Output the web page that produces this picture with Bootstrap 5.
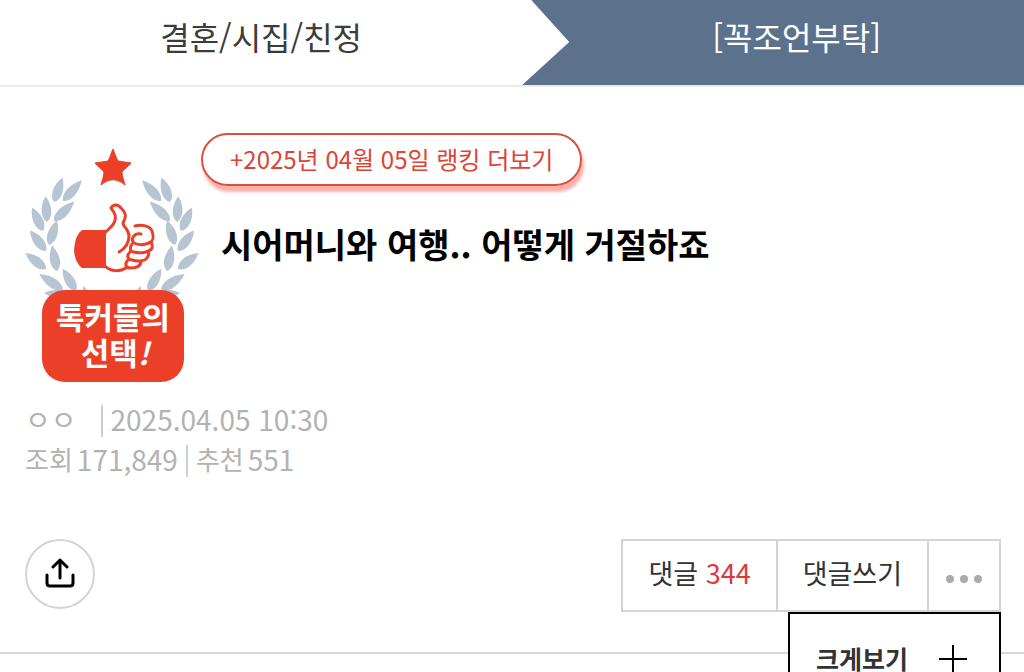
<!DOCTYPE html>
<html lang="ko">
<head>
<meta charset="utf-8">
<meta name="viewport" content="width=device-width, initial-scale=1">
<title>시어머니와 여행.. 어떻게 거절하죠</title>
<link href="https://cdn.jsdelivr.net/npm/bootstrap@5.3.0/dist/css/bootstrap.min.css" rel="stylesheet">
<style>
body { font-family: "Noto Sans CJK KR", sans-serif; background: #fff; color: #333; min-height: 100vh; }
a, button { white-space: nowrap; }
.crumbs { display: grid; grid-template-columns: 51fr 49fr; height: 87px; border-bottom: 2px solid #ebebeb; line-height: 72px; font-size: 32px; }
.crumbs a { color: #3c3c3c; }
.crumbs .crumb-active { background: #5c728c; color: #fff; padding-left: 47px; clip-path: polygon(9px 0, 100% 0, 100% 100%, 0 100%, 47px 42px); }
.post { padding: 46px 23px 40px 25px; border-bottom: 2px solid #d6d6d6; }
.emblem { width: 176px; height: 244px; margin-top: 8px; flex: none; }
.emblem text { font-size: 31px; font-weight: 700; fill: #fff; }
.rank-link { border: 2px solid #d9503f; border-radius: 27px; height: 53px; line-height: 47px; padding: 0 27px; font-size: 24px; color: #dc4436; box-shadow: 2px 6px 3px #fbb0a9; }
.post-title { font-size: 34px; line-height: 48px; font-weight: 700; color: #000; margin: 34px 0 0 20px; }
.meta { font-size: 28px; line-height: 40px; color: #b2b2b2; margin-top: 14px; }
.meta .word { font-size: 26px; }
.bar { width: 2px; height: 32px; background: #cfcfcf; position: relative; top: 2px; }
.post-tools { margin-top: 60px; }
.share { width: 70px; height: 70px; border: 2px solid #d4d4d4; border-radius: 50%; background: #fff; }
.actions { height: 73px; border: 2px solid #d4d4d4; }
.actions button { background: none; border: 0; padding: 0 25px 4px; font-size: 27px; color: #333; }
.actions button + button { border-left: 2px solid #d4d4d4; }
.actions .more { padding: 0 16px; }
.count { color: #e0383a; }
.zoom-box { top: 73px; right: 0; width: 213px; height: 94px; border: 2px solid #000; background: #fff; font-size: 25px; font-weight: 700; color: #333; padding: 0 32px 0 26px; }
</style>
</head>
<body>
<nav class="crumbs text-center">
  <a href="#" class="text-decoration-none">결혼/시집/친정</a>
  <a href="#" class="text-decoration-none crumb-active">[꼭조언부탁]</a>
</nav>
<main class="post">
  <header class="d-flex">
    <svg class="emblem" viewBox="25 141 176 244" role="img" aria-label="톡커들의 선택!">
      <defs>
        <path id="leaf" d="M0 0C-6-4-7-15 0-26C7-15 6-4 0 0Z"/>
        <g id="branch">
          <use href="#leaf" transform="translate(63 201) rotate(42) scale(1 1.08)"/>
          <use href="#leaf" transform="translate(54 202) rotate(19)"/>
          <use href="#leaf" transform="translate(54 221) rotate(46) scale(1 1.08)"/>
          <use href="#leaf" transform="translate(47 222) rotate(-3)"/>
          <use href="#leaf" transform="translate(43 231) rotate(-25)"/>
          <use href="#leaf" transform="translate(49 245) rotate(18)"/>
          <use href="#leaf" transform="translate(46 251) rotate(-38)"/>
          <use href="#leaf" transform="translate(57 271) rotate(-11)"/>
          <use href="#leaf" transform="translate(46 269) rotate(-52)"/>
          <use href="#leaf" transform="translate(63 290) rotate(-56) scale(1 1.1)"/>
          <use href="#leaf" transform="translate(76 291) rotate(-31)"/>
          <use href="#leaf" transform="translate(70 296) rotate(-83)"/>
          <path d="M83 286L90 292H83Z"/>
        </g>
      </defs>
      <g fill="#b7c5d3"><use href="#branch"/><use href="#branch" transform="matrix(-1 0 0 1 224 0)"/></g>
      <path fill="#ec3f28" stroke="#ec3f28" stroke-linejoin="round" d="M113 149C115 153 116 158 118 161C122 162 127 162 131 163C128 167 124 169 122 172C122 176 124 181 125 185C117 178 109 178 101 185C102 181 104 176 104 172C102 169 98 167 95 163C99 162 104 162 108 161C110 158 111 153 113 149Z"/>
      <path fill="#ec3f28" d="M82 230H106V268H82Q75 263 74 250Q75 235 82 230Z"/>
      <g fill="none" stroke="#ec3f28" stroke-width="3" stroke-linecap="round" stroke-linejoin="round">
        <path d="M104 234C108 229 112 227 114 223C117 217 115 213 111 208C113 204 118 204 121 208C127 214 126 217 123 223C123 227 129 229 129 236C129 243 126 248 119 252"/>
        <path d="M105 266C111 272 121 272 127 267"/>
        <path d="M135 226C142 224 150 226 152 231C154 237 154 241 149 243C144 245 138 245 134 243C130 239 134 233 141 234"/>
        <path d="M132 244C129 248 130 252 134 252C141 254 150 252 152 248C153 246 152 244 151 242"/>
        <path d="M130 252C126 256 128 260 132 260C138 262 145 261 147 258C149 255 149 253 148 252"/>
        <path d="M128 260C124 264 126 268 130 268C136 268 141 266 141 261"/>
      </g>
      <rect x="42" y="290" width="142" height="92" rx="23" fill="#ec3f28"/>
      <text x="113" y="329" text-anchor="middle">톡커들의</text>
      <text x="115" y="365" text-anchor="middle">선택<tspan font-style="italic">!</tspan></text>
    </svg>
    <div class="flex-grow-1">
      <a href="#" class="rank-link d-inline-block text-decoration-none ms-n1">+2025년 04월 05일 랭킹 더보기</a>
      <h1 class="post-title">시어머니와 여행.. 어떻게 거절하죠</h1>
    </div>
  </header>
  <div class="meta">
    <div class="d-flex align-items-center"><span>ㅇㅇ</span><span class="bar ms-4 me-2"></span><time>2025.04.05 10:30</time></div>
    <div class="d-flex align-items-center"><span class="word me-1">조회</span><span>171,849</span><span class="bar mx-2"></span><span class="word me-1">추천</span><span>551</span></div>
  </div>
  <div class="post-tools d-flex justify-content-between align-items-start">
    <button class="share p-0" type="button" aria-label="공유">
      <svg width="30" height="32" viewBox="0 0 30 32" fill="none" stroke="#000" stroke-width="3" stroke-linecap="round" stroke-linejoin="round"><path d="M15 20V2M8 9L15 2L22 9M2 17V25Q2 28 5 28H25Q28 28 28 25V17"/></svg>
    </button>
    <div class="position-relative">
      <div class="actions d-flex">
        <button type="button">댓글 <span class="count">344</span></button>
        <button type="button">댓글쓰기</button>
        <button type="button" class="more" aria-label="더보기"><svg width="38" height="10" fill="#aaa"><circle cx="5" cy="5" r="4"/><circle cx="19" cy="5" r="4"/><circle cx="33" cy="5" r="4"/></svg></button>
      </div>
      <button type="button" class="zoom-box position-absolute d-flex align-items-center justify-content-between">크게보기
        <svg width="28" height="28" stroke="#000" stroke-width="2"><path d="M0 14H28M14 0V28"/></svg>
      </button>
    </div>
  </div>
</main>
<script src="https://cdn.jsdelivr.net/npm/bootstrap@5.3.0/dist/js/bootstrap.bundle.min.js"></script>
</body>
</html>
